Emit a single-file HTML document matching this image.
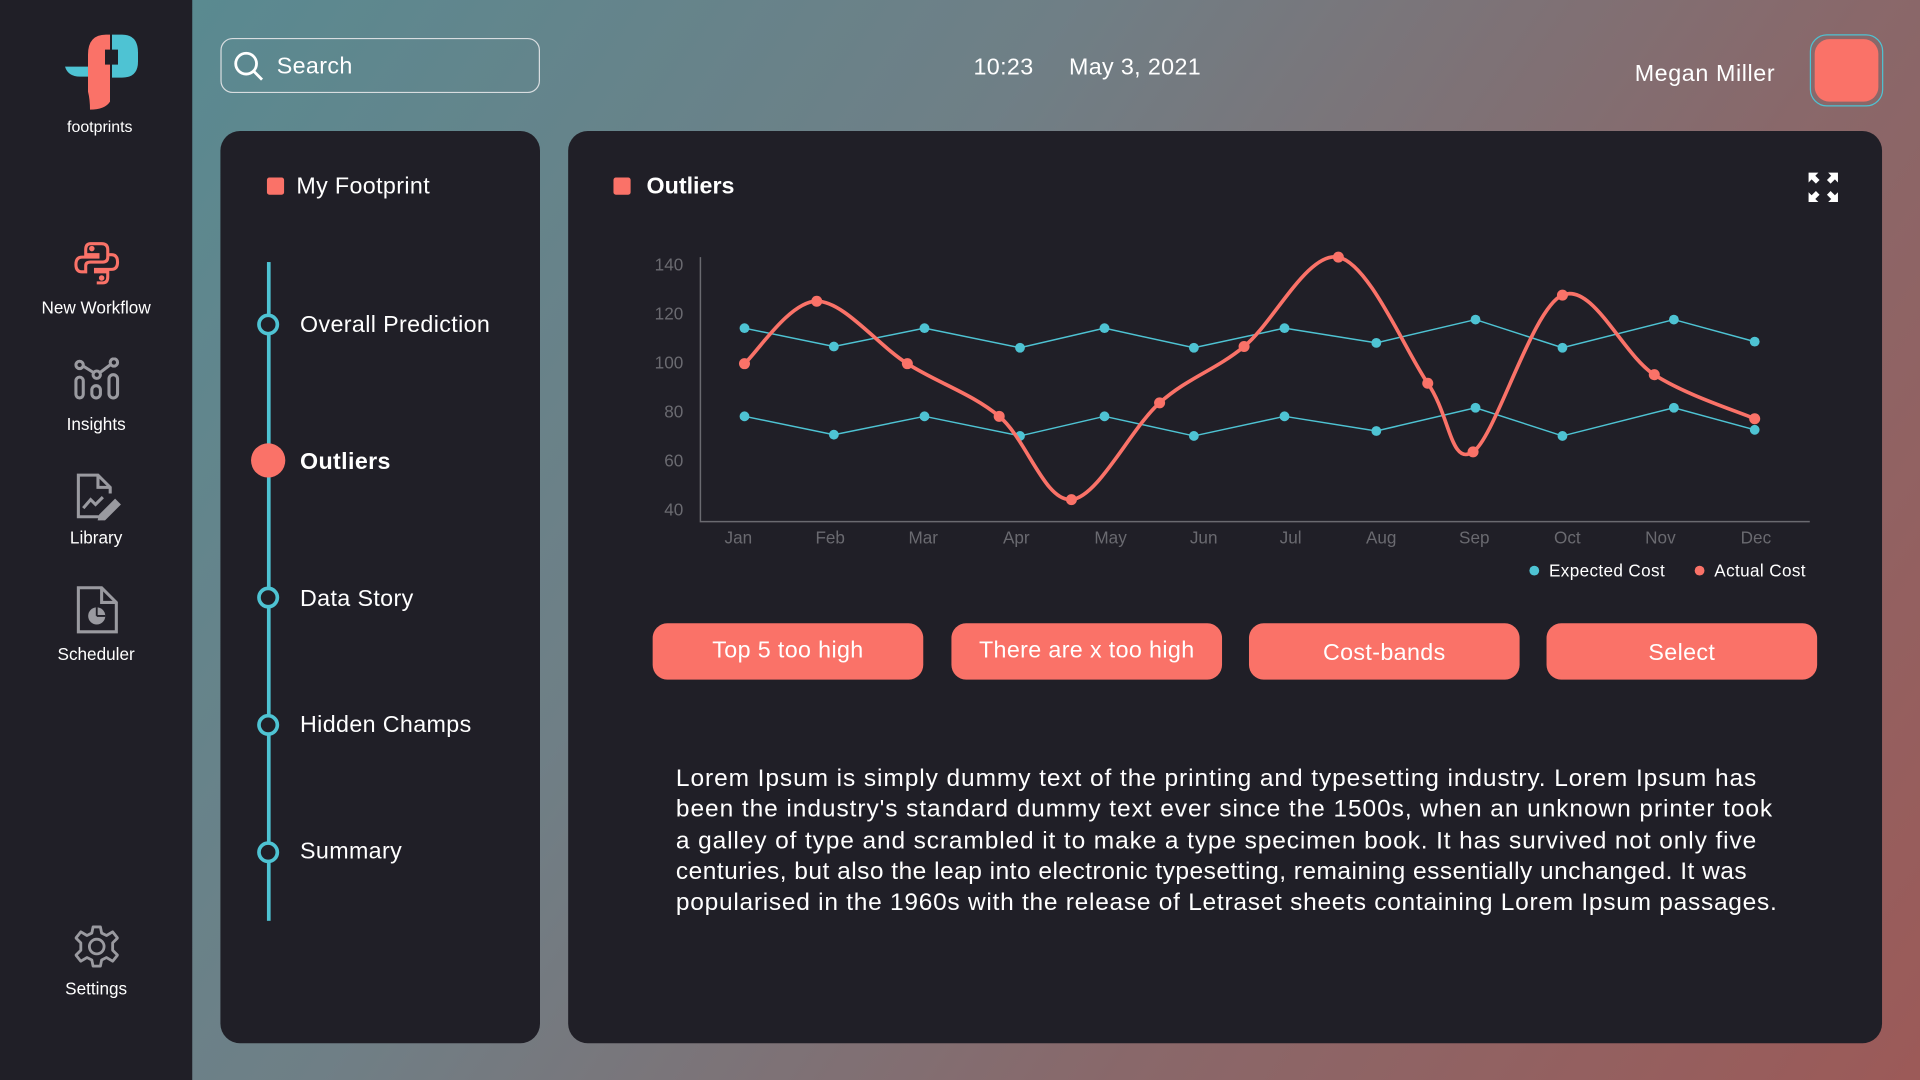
<!DOCTYPE html>
<html><head><meta charset="utf-8"><style>
*{margin:0;padding:0;box-sizing:border-box}
html,body{width:1920px;height:1080px;overflow:hidden;background:#201f27}
#s{position:absolute;left:0;top:0;width:1568px;height:882px;transform:scale(1.22449);transform-origin:0 0;
background:linear-gradient(125deg,#558c93 0%,#6f7f86 40%,#89686a 70%,#9c5a58 100%);font-family:"Liberation Sans",sans-serif;color:#fff}
.a{position:absolute}
.side{left:0;top:0;width:157px;height:882px;background:#201f27}
.nav{position:absolute;left:0;width:157px;text-align:center;font-size:14px;color:#fff}
.panel{background:#201f27;border-radius:16px}
.btn{position:absolute;top:509px;width:221px;height:46px;background:#fa7268;border-radius:12px;font-size:19px;text-align:center;line-height:46px;color:#fff}
.tl{position:absolute;left:245px;font-size:19px;letter-spacing:0.3px}
.c{position:absolute;left:210px;width:18px;height:18px;border:3px solid #4ec3d3;border-radius:50%;background:#201f27}
.p div{white-space:nowrap;height:25.3px}
</style></head><body><div id="s">
<div class="a side"></div>
<svg class="a" style="left:49px;top:16.3px" width="73.5" height="81.7" viewBox="0 0 90 100">
<path d="M28,47 L5,47 Q8,57 20,57 L28,57 Z" fill="#4ec3d3"/>
<path d="M52,15 L62,15 Q78,15 78,33 L78,42 Q78,58 62,58 L52,58 Z" fill="#4ec3d3"/>
<path d="M50,15 L50,82 Q45,90 30,90 Q30,80 28,72 L28,35 Q28,15 46,15 Z" fill="#fa7268"/>
<rect x="45" y="30" width="13" height="15" fill="#201f27"/>
</svg>
<div class="nav" style="top:96px;font-size:13px;left:3px">footprints</div>
<svg class="a" style="left:60px;top:196px" width="38" height="38" viewBox="0 0 38 38" fill="none" stroke="#fa7268" stroke-width="2.5">
<path d="M19,3 H14 Q10,3 10,8 V12 H20 V14 H7 Q2,14 2,20 Q2,26 7,26 H10 V21 Q10,18 14,18 H24 Q28,18 28,14 V8 Q28,3 23,3 Z"/>
<path d="M19,35 H24 Q28,35 28,30 V26 H18 V24 H31 Q36,24 36,18 Q36,12 31,12 H28"/>
<circle cx="15" cy="7" r="1" fill="#fa7268"/><circle cx="23" cy="31" r="1" fill="#fa7268"/>
</svg>
<div class="nav" style="top:243px">New Workflow</div>
<svg class="a" style="left:60px;top:292px" width="38" height="36" viewBox="0 0 38 36" fill="none" stroke="#9a9aa0" stroke-width="2.5">
<circle cx="5" cy="6" r="3"/><circle cx="19" cy="14" r="3"/><circle cx="33" cy="4" r="3"/>
<path d="M8,7 L16,12 M22,12 L30,6"/>
<rect x="2" y="16" width="6" height="17" rx="3"/><rect x="15" y="23" width="7" height="10" rx="3.5"/><rect x="29" y="14" width="7" height="19" rx="3.5"/>
</svg>
<div class="nav" style="top:338px">Insights</div>
<svg class="a" style="left:60px;top:385px" width="40" height="40" viewBox="0 0 40 40" fill="none" stroke="#9a9aa0" stroke-width="2.5">
<path d="M24,37 H4 V3 H20 L30,13 V18"/><path d="M20,3 V13 H30"/><path d="M8,30 L14,23 L18,27 L24,21"/>
<path d="M22,36 L34,24 L37,27 L25,39 L21,40 Z" fill="#9a9aa0"/>
</svg>
<div class="nav" style="top:431px">Library</div>
<svg class="a" style="left:61px;top:477px" width="36" height="42" viewBox="0 0 36 42" fill="none" stroke="#9a9aa0" stroke-width="2.5">
<path d="M3,3 H22 L34,15 V39 H3 Z"/><path d="M22,3 V15 H34"/>
<circle cx="18" cy="26" r="7" fill="#9a9aa0" stroke="none"/><path d="M18,26 V19 M18,26 H25" stroke="#201f27" stroke-width="1.5"/>
</svg>
<div class="nav" style="top:526px">Scheduler</div>
<svg class="a" style="left:61px;top:755px" width="36" height="36" viewBox="0 0 36 36" fill="none" stroke="#9a9aa0" stroke-width="2.3">
<path d="M15,2 H21 L22,7 L26,9 L31,6 L35,11 L31,15 V21 L35,25 L31,30 L26,27 L22,29 L21,34 H15 L14,29 L10,27 L5,30 L1,25 L5,21 V15 L1,11 L5,6 L10,9 L14,7 Z" stroke-linejoin="round"/>
<circle cx="18" cy="18" r="6"/>
</svg>
<div class="nav" style="top:799px">Settings</div>

<div class="a" style="left:180px;top:31px;width:261px;height:45px;border:1.5px solid #d8dde0;border-radius:10px"></div>
<svg class="a" style="left:190px;top:41px" width="26" height="26" viewBox="0 0 26 26" fill="none" stroke="#fff" stroke-width="2.3"><circle cx="11" cy="11" r="8.5"/><path d="M17,17 L24,24"/></svg>
<div class="a" style="left:226px;top:44px;font-size:19px;letter-spacing:0.3px">Search</div>
<div class="a" style="left:795px;top:45px;font-size:19px;letter-spacing:0.3px">10:23</div>
<div class="a" style="left:873px;top:45px;font-size:19px;letter-spacing:0.3px">May 3, 2021</div>
<div class="a" style="left:1335px;top:50px;font-size:19px;letter-spacing:0.5px">Megan Miller</div>
<div class="a" style="left:1478px;top:28px;width:60px;height:59px;border:1px solid #4ec3d3;border-radius:14px"></div>
<div class="a" style="left:1482px;top:32px;width:52px;height:51px;background:#fa7268;border-radius:12px"></div>

<div class="a panel" style="left:180px;top:107px;width:261px;height:745px"></div>
<div class="a" style="left:218px;top:145px;width:14px;height:14px;background:#fa7268;border-radius:2px"></div>
<div class="a" style="left:242px;top:142px;font-size:19px;letter-spacing:0.3px">My Footprint</div>
<div class="a" style="left:218px;top:214px;width:3px;height:538px;background:#4ec3d3"></div>
<div class="c" style="top:256px"></div><div class="tl" style="top:255px">Overall Prediction</div>
<div class="a" style="left:205px;top:362px;width:28px;height:28px;border-radius:50%;background:#fa7268"></div><div class="tl" style="top:367px;font-weight:bold">Outliers</div>
<div class="c" style="top:479px"></div><div class="tl" style="top:479px">Data Story</div>
<div class="c" style="top:583px"></div><div class="tl" style="top:582px">Hidden Champs</div>
<div class="c" style="top:687px"></div><div class="tl" style="top:685px">Summary</div>

<div class="a panel" style="left:464px;top:107px;width:1073px;height:745px"></div>
<div class="a" style="left:501px;top:145px;width:14px;height:14px;background:#fa7268;border-radius:2px"></div>
<div class="a" style="left:528px;top:142px;font-size:19px;font-weight:bold">Outliers</div>
<svg class="a" style="left:1476px;top:140px" width="26" height="26" viewBox="0 0 26 26" fill="#fff"><path d="M1,1H9L6.5,3.5L10,7L7,10L3.5,6.5L1,9Z"/><path d="M25,1H17L19.5,3.5L16,7L19,10L22.5,6.5L25,9Z"/><path d="M1,25H9L6.5,22.5L10,19L7,16L3.5,19.5L1,17Z"/><path d="M25,25H17L19.5,22.5L16,19L19,16L22.5,19.5L25,17Z"/></svg>

<svg class="a" style="left:0;top:0" width="1568" height="882" id="ch">
<g fill="#6a6a70" font-size="14" font-family="Liberation Sans,sans-serif" text-anchor="end">
<text x="558" y="221">140</text><text x="558" y="261">120</text><text x="558" y="301">100</text><text x="558" y="341">80</text><text x="558" y="381">60</text><text x="558" y="421">40</text></g>
<g fill="#6a6a70" font-size="14" font-family="Liberation Sans,sans-serif" text-anchor="middle">
<text x="603" y="444">Jan</text><text x="678" y="444">Feb</text><text x="754" y="444">Mar</text><text x="830" y="444">Apr</text><text x="907" y="444">May</text><text x="983" y="444">Jun</text><text x="1054" y="444">Jul</text><text x="1128" y="444">Aug</text><text x="1204" y="444">Sep</text><text x="1280" y="444">Oct</text><text x="1356" y="444">Nov</text><text x="1434" y="444">Dec</text></g>
<path d="M572,210V426H1478" fill="none" stroke="#6a6a70" stroke-width="1.2"/>
<circle cx="1253" cy="466" r="4" fill="#4ec3d3"/><text x="1265" y="471" fill="#fff" font-size="14" font-family="Liberation Sans,sans-serif" letter-spacing="0.3">Expected Cost</text>
<circle cx="1388" cy="466" r="4" fill="#fa7268"/><text x="1400" y="471" fill="#fff" font-size="14" font-family="Liberation Sans,sans-serif" letter-spacing="0.3">Actual Cost</text>
</svg>

<div class="btn" style="left:533px;letter-spacing:0.3px">Top 5 too high</div>
<div class="btn" style="left:777px;letter-spacing:0.3px">There are x too high</div>
<div class="btn" style="left:1020px;letter-spacing:0.3px;line-height:50px">Cost-bands</div>
<div class="btn" style="left:1263px;letter-spacing:0.3px;line-height:50px">Select</div>

<div class="a p" style="left:552px;top:624px;font-size:20px;line-height:25.3px">
<div style="letter-spacing:0.75px">Lorem Ipsum is simply dummy text of the printing and typesetting industry. Lorem Ipsum has</div>
<div style="letter-spacing:0.76px">been the industry's standard dummy text ever since the 1500s, when an unknown printer took</div>
<div style="letter-spacing:0.72px">a galley of type and scrambled it to make a type specimen book. It has survived not only five</div>
<div style="letter-spacing:0.4px">centuries, but also the leap into electronic typesetting, remaining essentially unchanged. It was</div>
<div style="letter-spacing:0.6px">popularised in the 1960s with the release of Letraset sheets containing Lorem Ipsum passages.</div>
</div>
</div>
<script>
var ns="http://www.w3.org/2000/svg",ch=document.getElementById("ch");
function el(n,a){var e=document.createElementNS(ns,n);for(var k in a)e.setAttribute(k,a[k]);ch.appendChild(e);return e}
var e1=[[608,268],[681,283],[755,268],[833,284],[902,268],[975,284],[1049,268],[1124,280],[1205,261],[1276,284],[1367,261],[1433,279]];
var e2=[[608,340],[681,355],[755,340],[833,356],[902,340],[975,356],[1049,340],[1124,352],[1205,333],[1276,356],[1367,333],[1433,351]];
var ac=[[608,297],[667,246],[741,297],[816,340],[875,408],[947,329],[1016,283],[1093,210],[1166,313],[1203,369],[1276,241],[1351,306],[1433,342]];
[e1,e2].forEach(function(p){el("polyline",{points:p.map(function(q){return q.join(",")}).join(" "),fill:"none",stroke:"#4ec3d3","stroke-width":1.2});p.forEach(function(q){el("circle",{cx:q[0],cy:q[1],r:4,fill:"#4ec3d3"})})});
var d="M"+ac[0].join(",");
for(var i=0;i<ac.length-1;i++){var p0=ac[Math.max(i-1,0)],p1=ac[i],p2=ac[i+1],p3=ac[Math.min(i+2,ac.length-1)];
d+=" C"+(p1[0]+(p2[0]-p0[0])/6)+","+(p1[1]+(p2[1]-p0[1])/6)+" "+(p2[0]-(p3[0]-p1[0])/6)+","+(p2[1]-(p3[1]-p1[1])/6)+" "+p2[0]+","+p2[1];}
el("path",{d:d,fill:"none",stroke:"#fa7268","stroke-width":3});
ac.forEach(function(q){el("circle",{cx:q[0],cy:q[1],r:4.5,fill:"#fa7268"})});
</script>
</body></html>
